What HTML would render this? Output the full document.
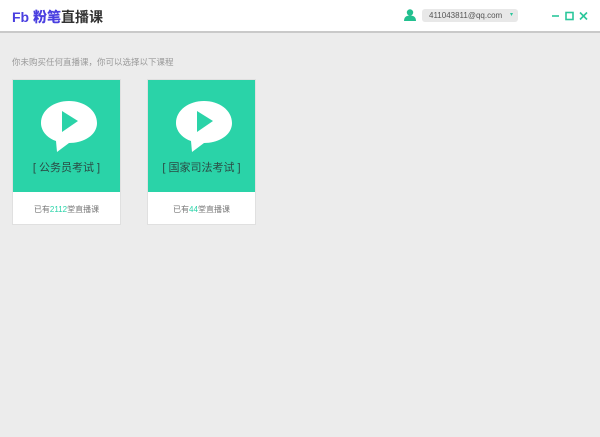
<!DOCTYPE html>
<html><head><meta charset="utf-8"><style>
body{margin:0;width:600px;height:437px;background:#ececec;font-family:"Liberation Sans","Noto Sans CJK SC",sans-serif;position:relative;overflow:hidden}
.hdr{position:absolute;left:0;top:0;width:600px;height:31px;background:#fff;border-bottom:2px solid #c9c9c9}
.logo{position:absolute;left:12px;top:7px;font-size:14px;font-weight:bold;color:#333;letter-spacing:0}
.logo b{color:#4a3fe0}
.mail{position:absolute;left:422px;top:9px;width:96px;height:13px;background:#e8e8e8;border-radius:3px;font-size:8px;color:#555;line-height:13px;padding-left:7px;box-sizing:border-box}
.mail span{position:absolute;right:5px;color:#2ac79b;font-size:6px}
.tip{position:absolute;left:12px;top:56px;font-size:8.5px;color:#999}
.card{position:absolute;top:79px;width:109px;height:146px;background:#fff;border:1px solid #e0e0e0;box-sizing:border-box}
.top{height:112px;background:#2ad3a8;position:relative}
.top svg{position:absolute;left:26px;top:18px}
.t{position:absolute;top:79px;width:100%;text-align:center;font-size:11px;color:#2b4a44}
.b{text-align:center;font-size:8px;color:#777;margin-top:12px}
.b i{font-style:normal;color:#2ad3a8}
</style></head><body>
<div class="hdr">
<div class="logo"><b>Fb 粉笔</b>直播课</div>
<svg style="position:absolute;left:404px;top:9px" width="12" height="12"><circle cx="6" cy="3.5" r="3.2" fill="#22c08f"/><path d="M0 12 Q0 6.5 6 6.5 Q12 6.5 12 12Z" fill="#22c08f"/></svg>
<div class="mail">411043811@qq.com<span>▾</span></div>
<svg style="position:absolute;left:551px;top:11px" width="40" height="10" stroke="#2ac79b" stroke-width="1.6" fill="none"><path d="M1 5H8"/><rect x="15" y="1.5" width="7" height="7"/><path d="M29 1.5L36 8.5M36 1.5L29 8.5"/></svg>
</div>
<div class="tip">你未购买任何直播课，你可以选择以下课程</div>
<div class="card" style="left:12px"><div class="top">
<svg width="60" height="56"><path d="M30 3C45 3 58 12 58 25C58 37 45 45 30 45L18 54L17 43C8 40 2 33 2 25C2 12 15 3 30 3Z" fill="#fff"/><path d="M23 13L39 23L23 34Z" fill="#2ad3a8"/></svg>
<div class="t">[ 公务员考试 ]</div></div>
<div class="b">已有<i>2112</i>堂直播课</div></div>
<div class="card" style="left:147px"><div class="top">
<svg width="60" height="56"><path d="M30 3C45 3 58 12 58 25C58 37 45 45 30 45L18 54L17 43C8 40 2 33 2 25C2 12 15 3 30 3Z" fill="#fff"/><path d="M23 13L39 23L23 34Z" fill="#2ad3a8"/></svg>
<div class="t">[ 国家司法考试 ]</div></div>
<div class="b">已有<i>44</i>堂直播课</div></div>
</body></html>
